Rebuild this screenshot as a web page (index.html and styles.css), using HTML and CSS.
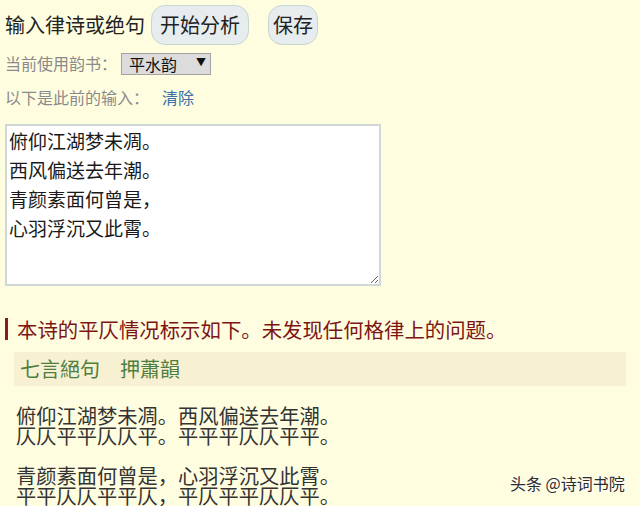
FILE: index.html
```html
<!DOCTYPE html>
<html lang="zh">
<head>
<meta charset="utf-8">
<title>律诗分析</title>
<link rel="stylesheet" href="styles.css">
</head>
<body>
<div class="toolbar">
  <span class="title">输入律诗或绝句</span>
  <button class="btn btn-wide">开始分析</button>
  <button class="btn btn-narrow">保存</button>
</div>
<div class="row row-book">
  <span class="muted">当前使用韵书：</span>
  <span class="select-wrap">
    <select class="select"><option>平水韵</option></select>
  </span>
</div>
<div class="row row-prev">
  <span class="muted">以下是此前的输入：</span>
  <a class="link" href="#">清除</a>
</div>
<textarea class="input">俯仰江湖梦未凋。
西风偏送去年潮。
青颜素面何曾是，
心羽浮沉又此霄。</textarea>
<h2 class="result">本诗的平仄情况标示如下。未发现任何格律上的问题。</h2>
<div class="meta">七言絕句　押蕭韻</div>
<pre class="poem">俯仰江湖梦未凋。西风偏送去年潮。
仄仄平平仄仄平。平平平仄仄平平。

青颜素面何曾是，心羽浮沉又此霄。
平平仄仄平平仄，平仄平平仄仄平。</pre>
<div class="watermark">头条 @诗词书院</div>
</body>
</html>
```

FILE: styles.css
```css
html, body {
  margin: 0;
  padding: 0;
}
body {
  background: #fffde0;
  padding: 0 5px;
  font-family: "Noto Sans CJK SC", "Noto Sans", sans-serif;
  color: #222;
  height: 506px;
  overflow: hidden;
  position: relative;
}
.toolbar {
  display: flex;
  align-items: center;
  padding-top: 5px;
  height: 40px;
}
.title {
  font-size: 20px;
  line-height: 24px;
  margin-right: 6px;
}
.btn {
  font-family: inherit;
  font-size: 20px;
  color: #222;
  height: 40px;
  background: #e7ecee;
  border: 1.5px solid #c6d6d0;
  border-radius: 14px;
  line-height: 1;
}
.btn-wide {
  width: 98px;
  padding: 0;
}
.btn-narrow {
  width: 50px;
  padding: 0;
  margin-left: 19px;
}
.row {
  display: flex;
  align-items: center;
  height: 22px;
  font-size: 16px;
}
.row-book {
  margin-top: 7px;
}
.row-prev {
  margin-top: 12px;
}
.muted {
  color: #8a8a8a;
}
.select-wrap {
  position: relative;
  margin-left: 4px;
  display: inline-block;
  height: 22px;
}
.select-wrap::after {
  content: "▼";
  position: absolute;
  right: 5px;
  top: 4px;
  font-size: 10px;
  line-height: 12px;
  color: #111;
  pointer-events: none;
}
.select {
  appearance: none;
  -webkit-appearance: none;
  width: 90px;
  height: 22px;
  background: #dcdcdc;
  border: 1px solid #a3a3a3;
  border-radius: 0;
  padding: 0 0 0 7px;
  font-family: inherit;
  font-size: 16px;
  color: #111;
  line-height: 20px;
}
.link {
  color: #3d6fa8;
  text-decoration: none;
  margin-left: 13px;
}
.input {
  display: block;
  box-sizing: border-box;
  margin-top: 16px;
  width: 376px;
  height: 162px;
  border: 2px solid #cfd8d6;
  background: #fff;
  padding: 0 2px;
  font-family: inherit;
  font-size: 19px;
  line-height: 29px;
  color: #1a1a1a;
  resize: both;
}
.result {
  margin: 32px 0 0;
  border-left: 3px solid #8b1a1a;
  padding-left: 9px;
  font-size: 20.4px;
  line-height: 22px;
  font-weight: normal;
  color: #7d1515;
}
.meta {
  margin: 12px 9px 0;
  height: 34px;
  line-height: 34px;
  padding-left: 6px;
  background: #f7f0d2;
  font-size: 20px;
  color: #4f7f3f;
}
.poem {
  margin: 20px 0 0 11px;
  font-family: inherit;
  font-size: 20.25px;
  line-height: 20px;
  color: #333;
}
.watermark {
  position: absolute;
  left: 510px;
  top: 473px;
  font-size: 16px;
  line-height: 20px;
  color: #2c2c2c;
  text-shadow: 0 0 2px #fff, 0 0 2px #fff;
}
```
